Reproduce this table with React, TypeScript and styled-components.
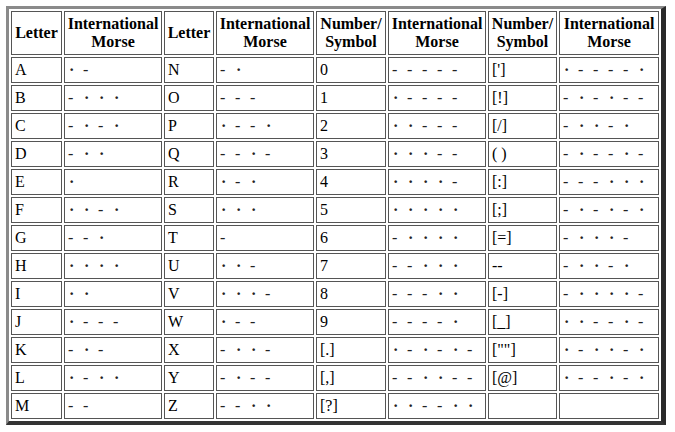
import React from 'react';
import styled, { createGlobalStyle } from 'styled-components';

const serif = `"Liberation Serif", "Times New Roman", serif`;

const GlobalStyle = createGlobalStyle`
  body {
    margin: 0;
    background: #ffffff;
    font-family: ${serif};
    color: #000000;
  }
`;

const Page = styled.div`
  padding: 6px;
`;

const Table = styled.table`
  border-collapse: separate;
  border-spacing: 2px;
  table-layout: fixed;
  width: 660px;
  border-style: solid;
  border-width: 3px 5px 4px 3px;
  border-color: #8a8a8a #2a2a2a #333333 #8a8a8a;
  font-family: ${serif};
  font-size: 16px;
`;

const Head = styled.th<{ $w: number }>`
  box-sizing: border-box;
  width: ${p => p.$w}px;
  height: 44px;
  padding: 0 2px;
  border: 1px solid #555555;
  font-family: ${serif};
  font-weight: bold;
  text-align: center;
  vertical-align: middle;
  line-height: 18px;
`;

const Cell = styled.td`
  box-sizing: border-box;
  height: 26px;
  padding: 0 3px;
  border: 1px solid #555555;
  font-family: ${serif};
  vertical-align: middle;
  white-space: nowrap;
  overflow: hidden;
`;

const Sym = styled.span<{ $dash: boolean }>`
  display: inline-block;
  width: 15px;
  color: #222222;
  font-weight: ${p => (p.$dash ? 'normal' : 'bold')};
  padding-left: ${p => (p.$dash ? 0 : 1)}px;
  box-sizing: border-box;
`;

const Morse = ({ code }: { code: string }) => (
  <>
    {code.split('').map((c, i) => (
      <Sym key={i} $dash={c === '-'}>{c === '-' ? '-' : '·'}</Sym>
    ))}
  </>
);

const letters1: [string, string][] = [
  ['A', '.-'], ['B', '-...'], ['C', '-.-.'], ['D', '-..'], ['E', '.'],
  ['F', '..-.'], ['G', '--.'], ['H', '....'], ['I', '..'], ['J', '.---'],
  ['K', '-.-'], ['L', '.-..'], ['M', '--'],
];

const letters2: [string, string][] = [
  ['N', '-.'], ['O', '---'], ['P', '.--.'], ['Q', '--.-'], ['R', '.-.'],
  ['S', '...'], ['T', '-'], ['U', '..-'], ['V', '...-'], ['W', '.--'],
  ['X', '-..-'], ['Y', '-.--'], ['Z', '--..'],
];

const numbers: [string, string][] = [
  ['0', '-----'], ['1', '.----'], ['2', '..---'], ['3', '...--'], ['4', '....-'],
  ['5', '.....'], ['6', '-....'], ['7', '--...'], ['8', '---..'], ['9', '----.'],
  ['[.]', '.-.-.-'], ['[,]', '--..--'], ['[?]', '..--..'],
];

const symbols: [string, string][] = [
  ["[']", '.----.'], ['[!]', '-.-.--'], ['[/]', '-..-.'], ['( )', '-.--.-'],
  ['[:]', '---...'], ['[;]', '-.-.-.'], ['[=]', '-...-'], ['--', '-..-.'],
  ['[-]', '-....-'], ['[_]', '..--.-'], ['[""]', '.-..-.'], ['[@]', '.--.-.'],
  ['', ''],
];

const groups = [letters1, letters2, numbers, symbols];

export default function App() {
  return (
    <Page>
      <GlobalStyle />
      <Table>
        <thead>
          <tr>
            <Head $w={51}>Letter</Head>
            <Head $w={98}>International<br />Morse</Head>
            <Head $w={50}>Letter</Head>
            <Head $w={98}>International<br />Morse</Head>
            <Head $w={70}>Number/<br />Symbol</Head>
            <Head $w={98}>International<br />Morse</Head>
            <Head $w={69}>Number/<br />Symbol</Head>
            <Head $w={100}>International<br />Morse</Head>
          </tr>
        </thead>
        <tbody>
          {letters1.map((_, row) => (
            <tr key={row}>
              {groups.map((g, gi) => (
                <React.Fragment key={gi}>
                  <Cell>{g[row][0]}</Cell>
                  <Cell><Morse code={g[row][1]} /></Cell>
                </React.Fragment>
              ))}
            </tr>
          ))}
        </tbody>
      </Table>
    </Page>
  );
}
